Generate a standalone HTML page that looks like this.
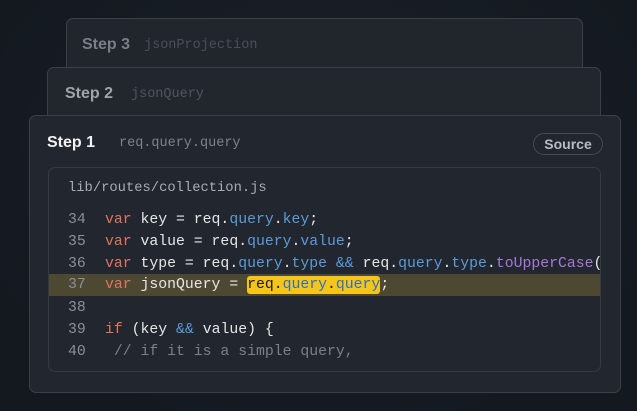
<!DOCTYPE html>
<html><head><style>
body{margin:0;width:637px;height:411px;overflow:hidden;background:radial-gradient(ellipse at 50% 40%,#1c222b 0%,#141920 80%);font-family:"Liberation Sans",sans-serif;position:relative}
.card{position:absolute;border:1px solid #3a404a;border-radius:7px;background:#22262e;box-sizing:border-box}
.t{position:absolute;font-weight:bold;font-size:16px}
.m{font-family:"Liberation Mono",monospace}
.sub{position:absolute;font-size:13.5px;color:#555b64}
.code{position:absolute;left:48px;top:167px;width:553px;height:205px;border:1px solid #343a44;border-radius:7px;box-sizing:border-box;background:#22262e;overflow:hidden}
.ln{position:absolute;left:0;width:553px;height:22px;line-height:22px;font-size:14.8px;color:#e6e6e6;white-space:pre}
.n{position:absolute;left:19px;color:#8b9098}
.c{position:absolute;left:56px}
.k{color:#e2735f}.b{color:#5b9bd9}.p{color:#a47ad6}.g{color:#7b8088}
.hl{background:#4d4832}
.y{background:#f5c51c;color:#1a1a1a;border-radius:3px;padding:1px 0}
.y .b{color:#2f6fc0}
</style></head><body>
<div class="card" style="left:66px;top:18px;width:517px;height:80px;background:#21252c"></div>
<div class="t" style="left:82px;top:36px;color:#7a7f87">Step 3</div>
<div class="sub m" style="left:144px;top:38px;color:#4a5058">jsonProjection</div>
<div class="card" style="left:47px;top:67px;width:554px;height:80px;background:#22262d"></div>
<div class="t" style="left:65px;top:85px;color:#a0a4ab">Step 2</div>
<div class="sub m" style="left:131px;top:87px;color:#4f555d">jsonQuery</div>
<div class="card" style="left:29px;top:115px;width:592px;height:278px"></div>
<div class="t" style="left:47px;top:134px;color:#f2f2f2">Step 1</div>
<div class="sub m" style="left:119px;top:136px;color:#7d828a">req.query.query</div>
<div style="position:absolute;left:533px;top:133px;width:70px;height:22px;border:1px solid #454b55;border-radius:11px;box-sizing:border-box;color:#b8bcc3;font-weight:bold;font-size:14px;text-align:center;line-height:20px">Source</div>
<div class="code">
<div class="m" style="position:absolute;left:19px;top:13px;font-size:13.8px;color:#a8adb4">lib/routes/collection.js</div>
<div class="ln m" style="top:41px"><span class="n">34</span><span class="c"><span class="k">var</span> key = req.<span class="b">query</span>.<span class="b">key</span>;</span></div>
<div class="ln m" style="top:63px"><span class="n">35</span><span class="c"><span class="k">var</span> value = req.<span class="b">query</span>.<span class="b">value</span>;</span></div>
<div class="ln m" style="top:85px"><span class="n">36</span><span class="c"><span class="k">var</span> type = req.<span class="b">query</span>.<span class="b">type</span> <span class="b">&amp;&amp;</span> req.<span class="b">query</span>.<span class="b">type</span>.<span class="p">toUpperCase</span>(</span></div>
<div class="ln m hl" style="top:106px"><span class="n">37</span><span class="c"><span class="k">var</span> jsonQuery = <span class="y">req.<span class="b">query</span>.<span class="b">query</span></span>;</span></div>
<div class="ln m" style="top:129px"><span class="n">38</span></div>
<div class="ln m" style="top:151px"><span class="n">39</span><span class="c"><span class="k">if</span> (key <span class="b">&amp;&amp;</span> value) {</span></div>
<div class="ln m" style="top:173px"><span class="n">40</span><span class="c g"> // if it is a simple query,</span></div>
</div>
</body></html>
